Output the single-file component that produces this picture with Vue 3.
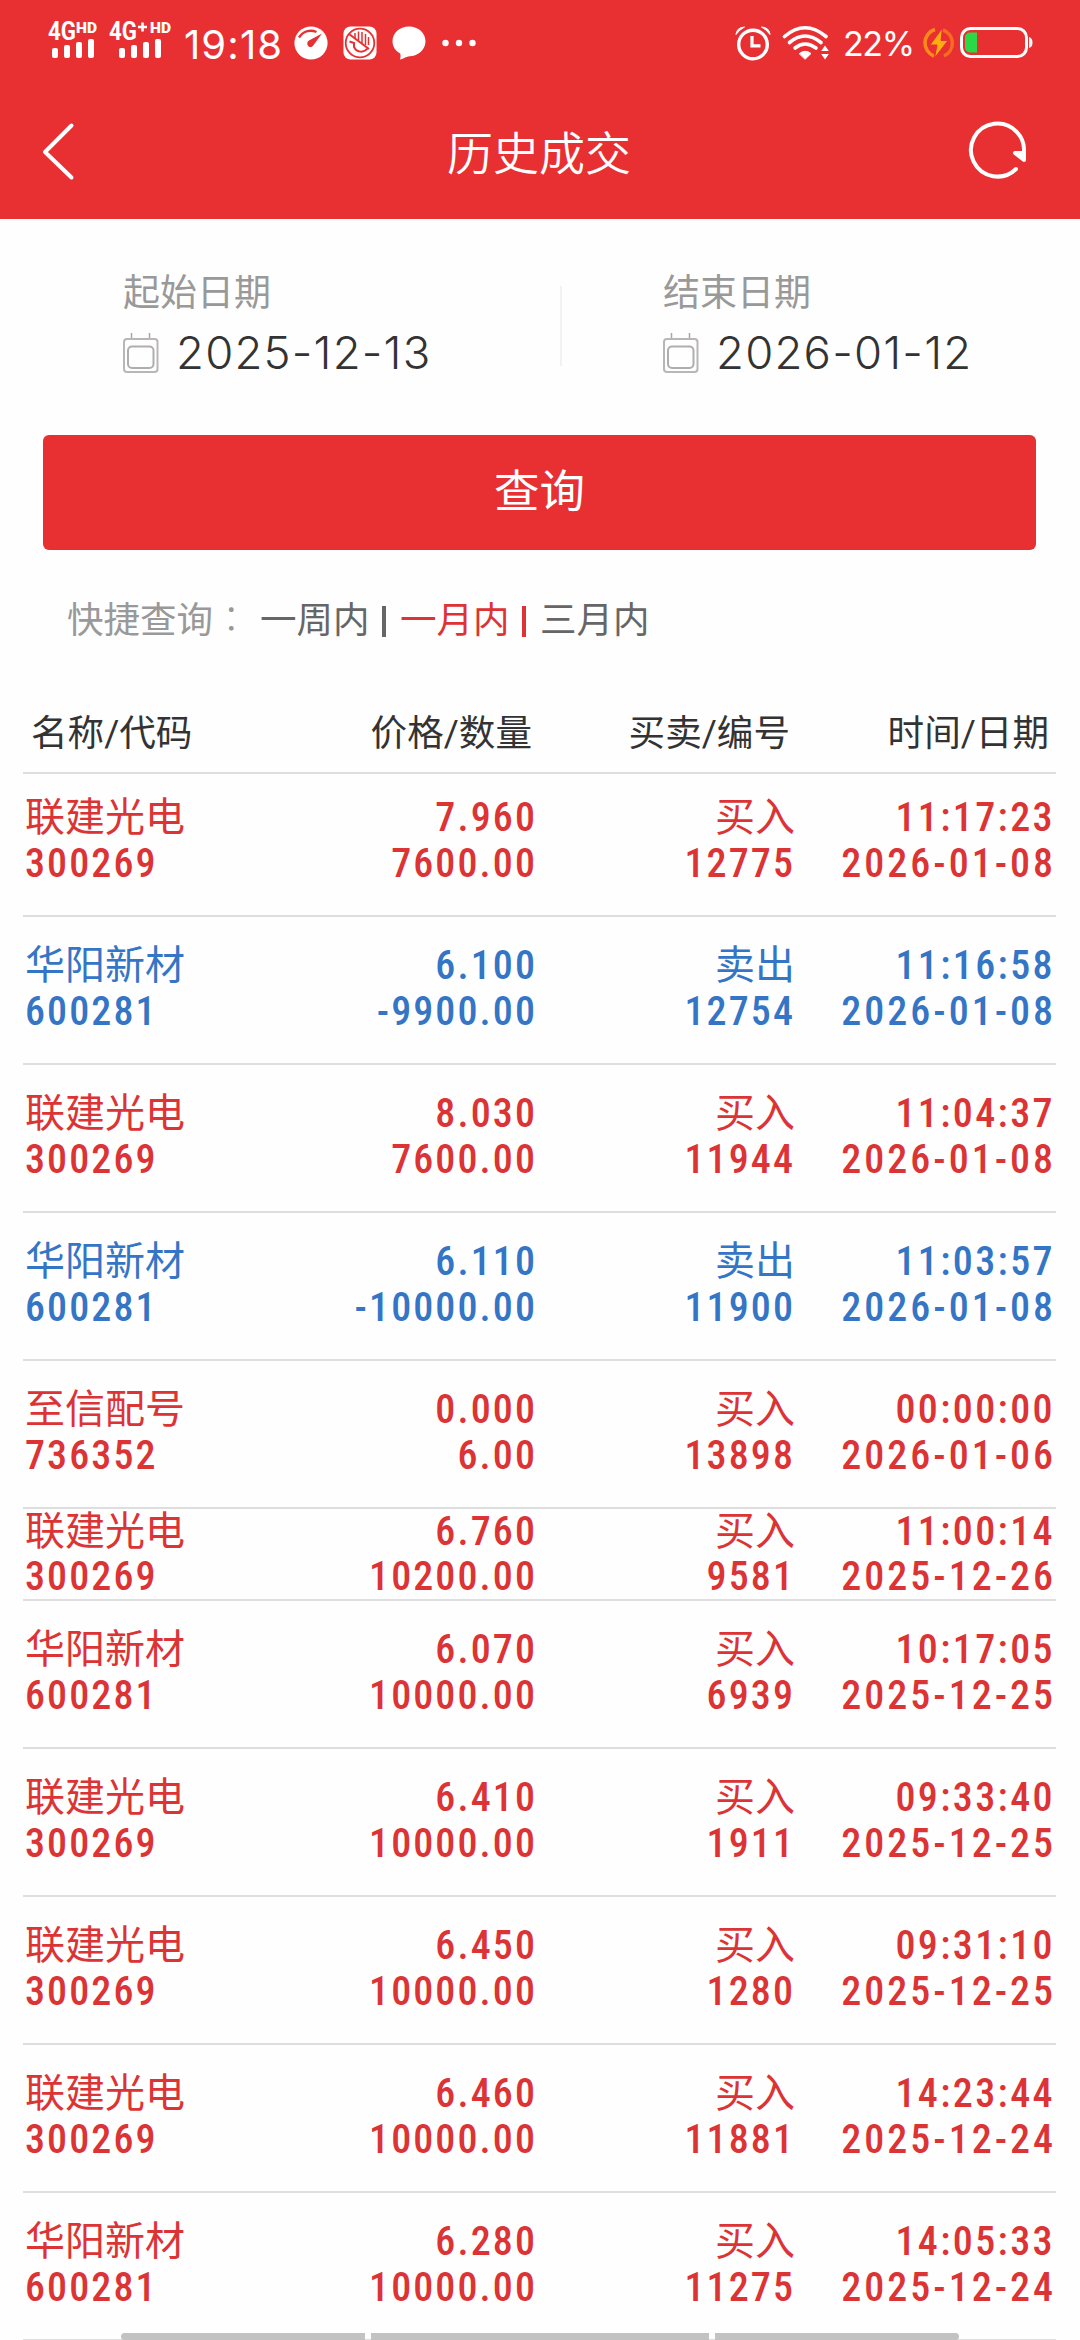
<template>
  <div class="page">
    <header class="top">
      <div class="status-bar">
        <svg class="signal" width="50" height="38" viewBox="0 0 50 38">
          <text x="0" y="19" class="net" textLength="28" lengthAdjust="spacingAndGlyphs">4G</text>
          <text x="28" y="11.500" class="hd" textLength="21" lengthAdjust="spacingAndGlyphs">HD</text>
          <rect v-for="(bar, i) in bars" :key="i" :x="4 + i * 12" :y="bar" width="6" :height="37 - bar" rx="2" />
        </svg>
        <svg class="signal signal-plus" width="63" height="38" viewBox="0 0 63 38">
          <text x="0" y="19" class="net" textLength="28" lengthAdjust="spacingAndGlyphs">4G</text>
          <path d="M33.500 1.500v9M29 6h9" stroke="#fff" stroke-width="2.600" />
          <text x="41" y="11.500" class="hd" textLength="21" lengthAdjust="spacingAndGlyphs">HD</text>
          <rect v-for="(bar, i) in bars" :key="i" :x="10 + i * 12" :y="bar" width="6" :height="37 - bar" rx="2" />
        </svg>
        <span class="clock">19:18</span>
        <svg class="gauge" width="34" height="34" viewBox="0 0 34 34">
          <circle cx="17" cy="17" r="16.6" fill="#fff" />
          <path d="M5 11.500C9.500 4.500 17 3.500 22.500 6" fill="none" stroke="#e83032" stroke-width="2.400" />
          <path d="M28 7.500L19.800 18.800a3.400 3.400 0 1 1-4.800-4.200Z" fill="#e83032" />
        </svg>
        <svg class="hand" width="34" height="34" viewBox="0 0 34 34">
          <rect x="0.500" y="0.500" width="33" height="33" rx="7" fill="#fff" />
          <circle cx="17" cy="17" r="14.300" fill="none" stroke="#e83032" stroke-width="1.800" />
          <path d="M6 8L26 23" stroke="#e83032" stroke-width="2" />
          <path d="M12 7v5M15.500 5.500v9M19 6v11M22.500 8v11M25.500 11v8" stroke="#e83032" stroke-width="1.500" />
          <path d="M6.500 15.500l4.500 1.500v4c3 6 10 6 14 1" fill="none" stroke="#e83032" stroke-width="2" />
        </svg>
        <svg class="chat" width="34" height="34" viewBox="0 0 34 34">
          <path d="M17 .5C26.500 .5 33.500 7 33.500 15.200S26.500 30 17.500 30.200C14.500 30.400 12 32.500 8 33.500c.8-2 .6-4 .3-6C3.500 25 .5 20.500.5 15.200.5 7 7.500.5 17 .5Z" fill="#fff" />
        </svg>
        <svg class="dots" width="34" height="34" viewBox="0 0 34 34">
          <circle v-for="n in 3" :key="n" :cx="n * 13.500 - 10" cy="17" r="3.200" fill="#fff" />
        </svg>

        <svg class="alarm" width="36" height="36" viewBox="0 0 36 36" fill="none" stroke="#fff">
          <circle cx="18" cy="19.500" r="14.300" stroke-width="3.400" />
          <path d="M17 11v9.800h8.500" stroke-width="3.200" />
          <path d="M1 9.500Q1.500 2.500 9.500 2Q4.500 4.500 1 9.500ZM35 9.500Q34.500 2.500 26.500 2Q31.500 4.500 35 9.500Z" fill="#fff" stroke-width="1" />
        </svg>
        <svg class="wifi" width="48" height="36" viewBox="0 0 48 36" fill="none" stroke="#fff" stroke-width="3.600" stroke-linecap="round">
          <path d="M2.500 11.500Q23 -6 44 11.500" />
          <path d="M7.500 17.500Q23 4.500 39 17.500" />
          <path d="M13 23Q23 15 34 23" />
          <path d="M17.500 28.500Q23 24 29 28.500L23.300 34Z" fill="#fff" stroke-width="1" />
          <path d="M43 20.500l3.800 5.500h-7.600ZM43 34.500l3.800-5.500h-7.600Z" fill="#fff" stroke="none" />
        </svg>
        <span class="percent">22%</span>
        <svg class="bolt" width="32" height="32" viewBox="0 0 32 32" fill="none">
          <path d="M12 2.500A14 14 0 0 0 11 29" stroke="#ff8a1c" stroke-width="3.500" />
          <path d="M20 3A14 14 0 0 1 21 29" stroke="#f96a22" stroke-width="3.500" />
          <path d="M19.500 1L7 18h7l-2.500 13L25 13.500h-7Z" fill="#ffad0d" stroke="#e83032" stroke-width="1" />
        </svg>
        <svg class="battery" width="74" height="32" viewBox="0 0 74 32">
          <rect x="1.500" y="1.500" width="65" height="28" rx="9" fill="none" stroke="#fff" stroke-width="3" />
          <path d="M10 5.500h7v20h-7a5 5 0 0 1-5-5v-10a5 5 0 0 1 5-5Z" fill="#2bd947" />
          <path d="M69 10q3.500 1 3.500 5.500T69 21Z" fill="#fff" />
        </svg>
      </div>

      <div class="nav">
        <svg width="34" height="60" viewBox="0 0 34 60" fill="none">
          <path d="M30.500 4.500L4 31L30.500 56.500" stroke="#fff" stroke-width="4" stroke-linecap="round" stroke-linejoin="round" />
        </svg>
        <h1>历史成交</h1>
        <svg width="60" height="60" viewBox="0 0 60 60" fill="none">
          <path d="M49 48A26.500 26.500 0 1 1 56.500 34" stroke="#fff" stroke-width="4" stroke-linecap="round" />
          <path d="M48 32h9v7Z" fill="#fff" stroke="#fff" stroke-width="4" stroke-linejoin="round" />
        </svg>
      </div>
    </header>

    <section class="dates">
      <div v-for="item in dates" :key="item.label" class="date-item">
        <div class="date-label">{{ item.label }}</div>
        <div class="date-value">
          <svg width="36" height="40" viewBox="0 0 36 40" fill="none">
            <path d="M8.500 0v6M26.500 0v6" stroke="#a8a6a6" stroke-width="1.500" />
            <rect x="1" y="6" width="33.500" height="33" rx="3" stroke="#b9b6b6" stroke-width="2" />
            <rect x="5" y="13.500" width="25.500" height="21.500" rx="4" stroke="#b0adad" stroke-width="2" />
          </svg>
          <span>{{ item.value }}</span>
        </div>
      </div>
    </section>

    <button class="query-btn">查询</button>

    <div class="quick">
      <span class="quick-label">快捷查询<span class="colon">：</span></span>
      <span
        v-for="range in ranges"
        :key="range"
        class="range"
        :class="{ active: range === current }"
        @click="current = range"
      >{{ range }}</span>
    </div>

    <div class="table">
      <div class="table-head">
        <span>名称/代码</span>
        <span>价格/数量</span>
        <span>买卖/编号</span>
        <span>时间/日期</span>
      </div>

      <div
        v-for="(row, index) in rows"
        :key="index"
        class="row"
        :class="{ sell: row.side === '卖出', first: index === 0, compact: row.compact }"
      >
        <div class="cell">
          <span class="cn">{{ row.name }}</span>
          <span>{{ row.code }}</span>
        </div>
        <div class="cell">
          <span>{{ row.price }}</span>
          <span>{{ row.amount }}</span>
        </div>
        <div class="cell">
          <span class="cn">{{ row.side }}</span>
          <span>{{ row.no }}</span>
        </div>
        <div class="cell">
          <span class="time">{{ row.time }}</span>
          <span class="date">{{ row.date }}</span>
        </div>
      </div>
    </div>

    <div class="gesture-bar">
      <i></i>
      <i class="wide"></i>
      <i></i>
    </div>
  </div>
</template>

<script setup>
import { ref } from "vue";

const bars = [27, 24, 21, 18];

const dates = [
  { label: "起始日期", value: "2025-12-13" },
  { label: "结束日期", value: "2026-01-12" },
];

const ranges = ["一周内", "一月内", "三月内"];
const current = ref("一月内");

const rows = [
  { name: "联建光电", code: "300269", price: "7.960", amount: "7600.00", side: "买入", no: "12775", time: "11:17:23", date: "2026-01-08" },
  { name: "华阳新材", code: "600281", price: "6.100", amount: "-9900.00", side: "卖出", no: "12754", time: "11:16:58", date: "2026-01-08" },
  { name: "联建光电", code: "300269", price: "8.030", amount: "7600.00", side: "买入", no: "11944", time: "11:04:37", date: "2026-01-08" },
  { name: "华阳新材", code: "600281", price: "6.110", amount: "-10000.00", side: "卖出", no: "11900", time: "11:03:57", date: "2026-01-08" },
  { name: "至信配号", code: "736352", price: "0.000", amount: "6.00", side: "买入", no: "13898", time: "00:00:00", date: "2026-01-06" },
  { name: "联建光电", code: "300269", price: "6.760", amount: "10200.00", side: "买入", no: "9581", time: "11:00:14", date: "2025-12-26", compact: true },
  { name: "华阳新材", code: "600281", price: "6.070", amount: "10000.00", side: "买入", no: "6939", time: "10:17:05", date: "2025-12-25" },
  { name: "联建光电", code: "300269", price: "6.410", amount: "10000.00", side: "买入", no: "1911", time: "09:33:40", date: "2025-12-25" },
  { name: "联建光电", code: "300269", price: "6.450", amount: "10000.00", side: "买入", no: "1280", time: "09:31:10", date: "2025-12-25" },
  { name: "联建光电", code: "300269", price: "6.460", amount: "10000.00", side: "买入", no: "11881", time: "14:23:44", date: "2025-12-24" },
  { name: "华阳新材", code: "600281", price: "6.280", amount: "10000.00", side: "买入", no: "11275", time: "14:05:33", date: "2025-12-24" },
];
</script>

<style>
body {
  margin: 0;
  background: #fefefe;
}
</style>

<style scoped>
.page {
  position: relative;
  width: 1080px;
  height: 2340px;
  overflow: hidden;
  background: #fefefe;
  font-family: Roboto, "Noto Sans CJK SC", sans-serif;
}

.top {
  height: 219px;
  background: #e83032;
  color: #fff;
}

.status-bar {
  display: flex;
  align-items: center;
  height: 85px;
  padding: 0 46px 0 48px;
}

.status-bar svg,
.status-bar span {
  flex: none;
}

.signal {
  align-self: flex-start;
  margin-top: 21px;
  fill: #fff;
  overflow: visible;
  font-family: Roboto, sans-serif;
}

.signal-plus {
  margin-left: 11px;
}

.net {
  font-size: 25px;
  font-weight: 700;
}

.hd {
  font-size: 15px;
  font-weight: 900;
}

.clock {
  width: 98px;
  margin-left: 12px;
  padding-top: 4px;
  font: 400 40px/46px Inter, sans-serif;
  letter-spacing: 1.1px;
  white-space: nowrap;
}

.gauge {
  margin-left: 12px;
}

.hand,
.chat {
  margin-left: 15px;
}

.dots {
  margin-left: 16px;
}

.alarm {
  margin-left: auto;
}

.wifi {
  margin-left: 11px;
}

.percent {
  width: 70px;
  margin-left: 13px;
  padding-top: 2px;
  font: 400 34px/42px Inter, sans-serif;
  letter-spacing: -1.4px;
  white-space: nowrap;
}

.bolt {
  margin-left: 10px;
}

.battery {
  margin-left: 5px;
}

.nav {
  display: flex;
  align-items: center;
  justify-content: space-between;
  height: 132px;
  padding: 0 53px 0 41px;
}

.nav h1 {
  margin: 0;
  padding: 0 0 3px 36px;
  font-family: "Noto Sans CJK SC", sans-serif;
  font-size: 46px;
  font-weight: 350;
  line-height: 60px;
}

.dates {
  display: flex;
  height: 216px;
  background: linear-gradient(#f2f2f2, #f2f2f2) no-repeat 560px 67px / 2px 80px;
}

.date-item {
  width: 417px;
  padding: 50px 0 0 123px;
}

.date-label {
  color: #999;
  font-size: 37px;
  line-height: 50px;
}

.date-value {
  display: flex;
  align-items: center;
  margin-top: 6px;
  color: #333;
  font: 300 45.5px/56px Inter, sans-serif;
}

.date-value span {
  margin-left: 17px;
  letter-spacing: 1.2px;
}

.query-btn {
  display: block;
  width: 993px;
  height: 115px;
  margin: 0 0 0 43px;
  padding: 0 0 9px;
  border: none;
  border-radius: 6px;
  background: #e83032;
  color: #fff;
  font: 400 45.5px "Noto Sans CJK SC", sans-serif;
}

.quick {
  display: flex;
  align-items: center;
  height: 54px;
  margin-top: 44px;
  padding-left: 67px;
  color: #666;
  font-size: 36.5px;
  line-height: 54px;
}

.quick-label {
  width: 193px;
  color: #999;
  white-space: nowrap;
}

.colon {
  font-family: "Noto Sans CJK JP", sans-serif;
  font-weight: 300;
  line-height: 1;
}

.range {
  display: flex;
  align-items: center;
}

.range:not(:last-child)::after {
  content: "";
  width: 4px;
  height: 31px;
  margin: 0 14.5px 0 12px;
  background: currentColor;
}

.active {
  color: #dc3335;
}

.table {
  margin: 0 24px 0 23px;
}

.table-head,
.row {
  display: grid;
  grid-template-columns: 254px 258px 258px 1fr;
  box-sizing: border-box;
  border-bottom: 2px solid #dedede;
}

.table-head {
  grid-template-columns: 243px 258px 258px 1fr;
  height: 126px;
  padding: 58px 7px 0 8px;
  color: #333;
  font-size: 36.6px;
  line-height: 56px;
}

.table-head span:not(:first-child),
.cell:not(:first-child) {
  text-align: right;
}

.row {
  height: 148px;
  padding: 26px 2px 0;
  color: #dc3335;
  font: 500 40px/46px "Roboto Condensed", Roboto, sans-serif;
  letter-spacing: 2.1px;
}

.row.first {
  height: 143px;
  padding-top: 21px;
}

.row.compact {
  height: 92px;
  padding-top: 0;
  line-height: 45px;
}

.row.sell {
  color: #3575c5;
}

.cell span {
  display: block;
  height: 1lh;
}

.cell .cn {
  font-family: Roboto, "Noto Sans CJK SC", sans-serif;
  font-weight: 400;
  letter-spacing: 0;
}

.cell .time {
  margin-right: -1px;
  letter-spacing: 2.4px;
}

.cell .date {
  margin-right: -2px;
  letter-spacing: 3px;
}

.gesture-bar {
  position: absolute;
  bottom: 0;
  left: 121px;
  display: flex;
  gap: 6px;
}

.gesture-bar i {
  width: 244px;
  height: 7px;
  background: #c2c2c2;
}

.gesture-bar .wide {
  width: 338px;
}

.gesture-bar i:first-child {
  border-radius: 4px 0 0 4px;
}

.gesture-bar i:last-child {
  border-radius: 0 4px 4px 0;
}
</style>
